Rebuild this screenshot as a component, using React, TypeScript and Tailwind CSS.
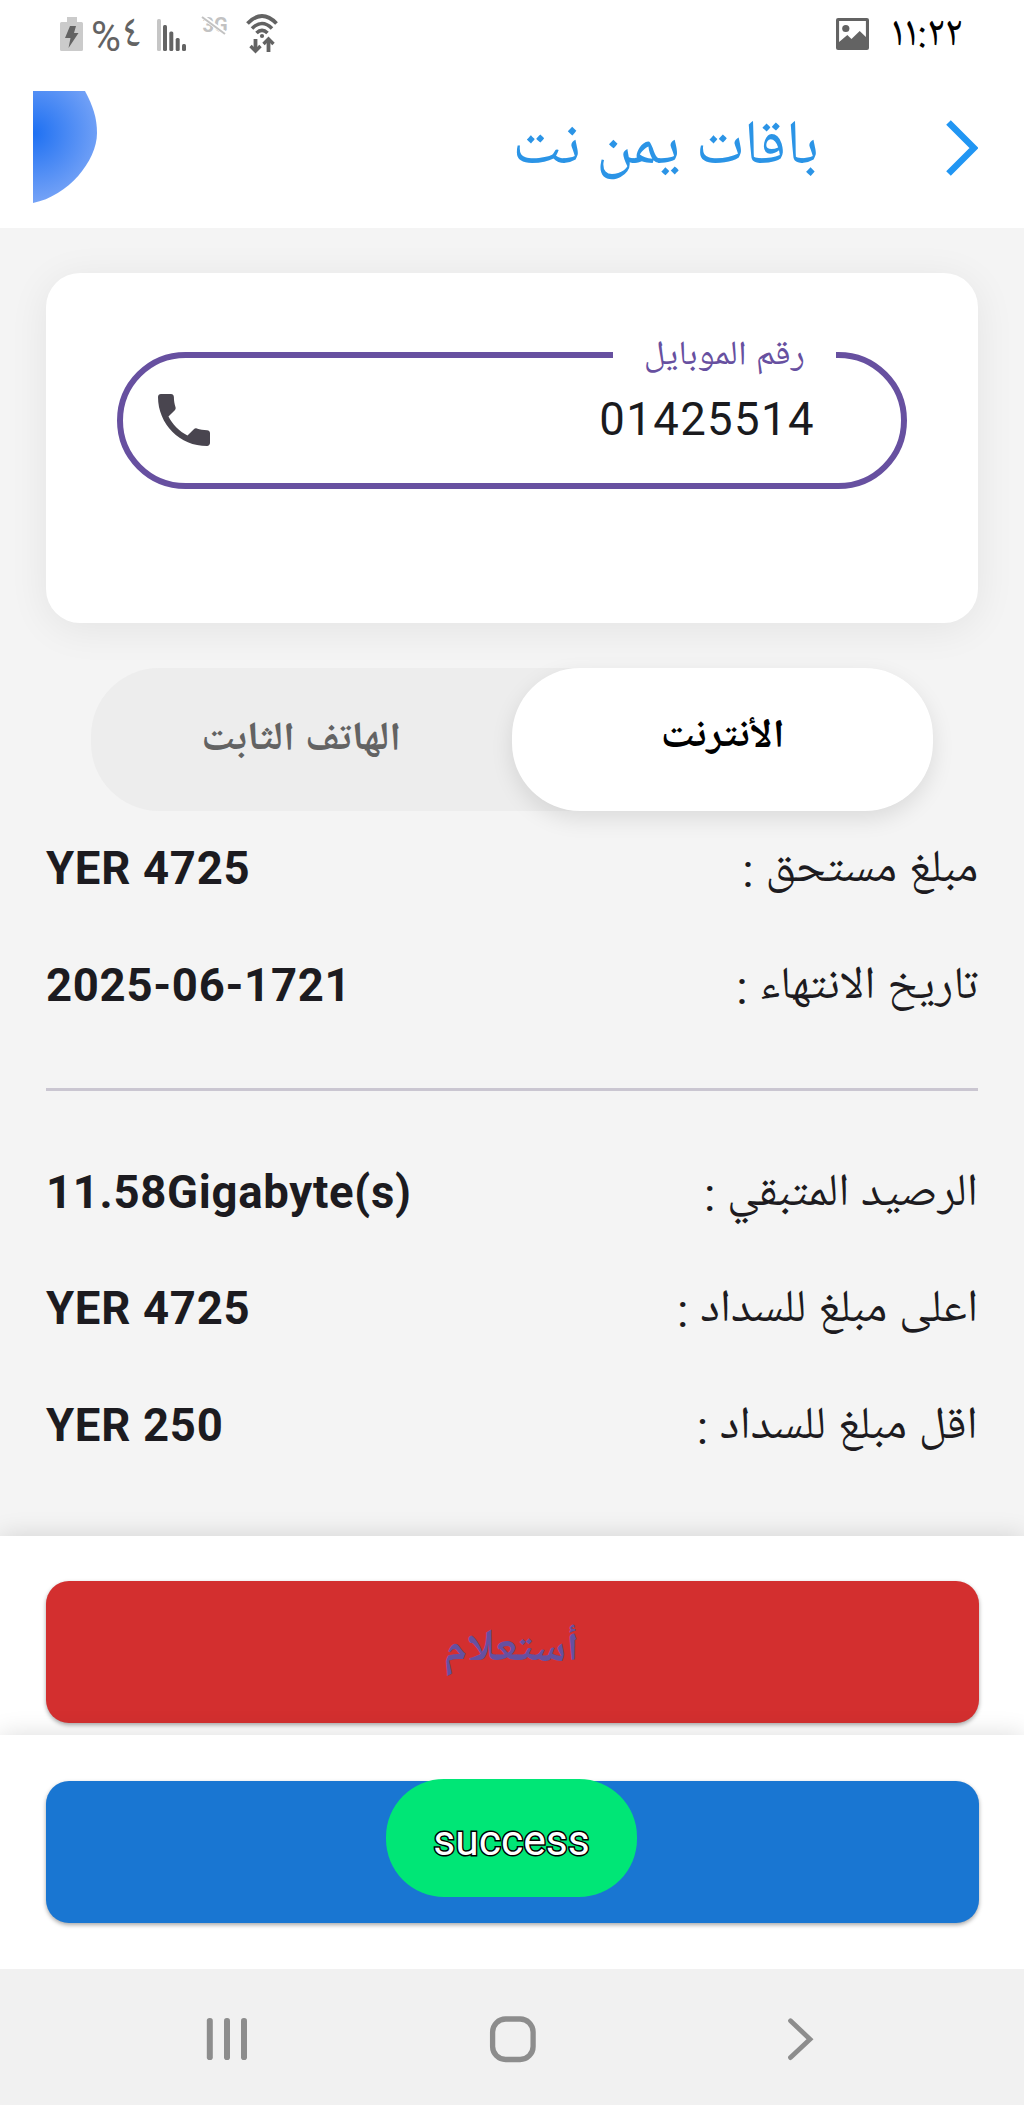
const NASKH = "font-['Noto_Naskh_Arabic_UI','Noto_Naskh_Arabic','Noto_Sans_Arabic','DejaVu_Sans',sans-serif]";
const ARABIC = "font-['Roboto','Noto_Naskh_Arabic_UI','Noto_Naskh_Arabic','Noto_Sans_Arabic','DejaVu_Sans',sans-serif]";

function StatusBar() {
  return (
    <div dir="ltr" className="flex h-[68px] shrink-0 items-start justify-between bg-white pl-[60px] pr-[62px]">
      <div className="flex items-start">
        <svg className="mt-[17px] h-[34px] w-[23px]" viewBox="0 0 23 34">
          <path d="M7 0h10v5h4.500q1.500 0 1.500 1.500v26q0 1.500-1.500 1.500h-20Q0 34 0 32.500v-26Q0 5 1.500 5H7z" fill="#cbcbcb" />
          <path d="M10 9h6l-2 7h4.500L8.500 31l2-10H5z" fill="#636363" />
        </svg>
        <span className="ml-[8px] mt-[14px] w-[31px] origin-left scale-x-[0.950] font-['Roboto'] text-[43px] leading-[44px] text-[#636363]">%</span>
        <span className={`${NASKH} mt-[12px] w-[18px] text-[46px] leading-[44px] text-[#636363]`}>٤</span>
        <svg className="ml-[16px] mt-[18px] h-[34px] w-[31px]" viewBox="0 0 31 34">
          <rect x="1" y="1" width="4" height="32" rx="1.500" fill="#c6c6c6" />
          <rect x="7" y="7" width="4" height="26" rx="1.500" fill="#636363" />
          <rect x="13.300" y="13.500" width="4" height="19.500" rx="1.500" fill="#636363" />
          <rect x="19.700" y="20" width="4" height="13" rx="1.500" fill="#636363" />
          <rect x="26" y="26" width="4" height="7" rx="1.500" fill="#636363" />
        </svg>
        <svg className="ml-[12px] mt-[11px] h-[30px] w-[32px]" viewBox="0 0 32 30">
          <text x="3.500" y="21" fontSize="20" fontWeight="700" className="font-['Roboto']" fill="#c2c2c2">3G</text>
          <path d="M2 4.500l25 18.500" stroke="#fff" strokeWidth="4.500" />
          <path d="M3 6l23 17" stroke="#c2c2c2" strokeWidth="2" />
        </svg>
        <svg className="ml-[15px] mt-[14px] h-[40px] w-[32px]" viewBox="0 0 32 40" fill="none" stroke="#636363">
          <path d="M1.500 9.500Q16-5.500 30.500 9.500" strokeWidth="3.800" />
          <path d="M6 14.500Q16 4.500 26 14.500M10.500 19Q16 13.500 21.500 19" strokeWidth="3.600" />
          <circle cx="16" cy="22" r="2.100" fill="#636363" stroke="none" />
          <path d="M9.500 25v12M22.500 38V26" strokeWidth="3.800" />
          <path d="M4.500 32l5 5 5-5M17.500 30l5-5 5 5" strokeWidth="3.400" />
        </svg>
      </div>
      <div className="flex items-start">
        <svg className="mt-[18px] h-[32px] w-[33px]" viewBox="0 0 32 32" preserveAspectRatio="none">
          <path fillRule="evenodd" d="M2 0h28q2 0 2 2v28q0 2-2 2H2q-2 0-2-2V2Q0 0 2 0zM3 3v21l8-7 4 4 8-8 6 6V3z" fill="#636363" />
          <circle cx="9.500" cy="10.500" r="3.500" fill="#636363" />
        </svg>
        <span className={`${NASKH} ml-[21px] mt-[13px] text-[43px] leading-[44px] text-black`}>١١:٢٢</span>
      </div>
    </div>
  );
}

function AppBar() {
  return (
    <div className="flex h-[160px] shrink-0 items-start justify-between bg-white pl-[33px] pr-[46px]">
      <div className="flex items-start">
        <svg className="mt-[52px] h-[56px] w-[32px]" viewBox="0 0 32 56" fill="none" stroke="#2196f3" strokeWidth="6.500">
          <path d="M2.500 2.500L28 28 2.500 53.500" />
        </svg>
        <h1 className={`${ARABIC} mr-[127px] mt-[47px] text-[62.500px] leading-[70px] text-[#2b94e6]`}>باقات يمن نت</h1>
      </div>
      <svg className="mt-[23px] h-[112px] w-[65px]" viewBox="0 0 65 112">
        <defs>
          <radialGradient id="orb" gradientUnits="userSpaceOnUse" cx="0" cy="42" r="78">
            <stop offset="0" stopColor="#1e70f2" />
            <stop offset="1" stopColor="#80a9f7" />
          </radialGradient>
        </defs>
        <path d="M0 0H52C60 15 64 27 64 42C64 70 35 105 0 112Z" fill="url(#orb)" />
      </svg>
    </div>
  );
}

function PhoneCard() {
  return (
    <div className="mx-[46px] mt-[45px] h-[350px] shrink-0 rounded-[34px] bg-white px-[71px] pt-[79px] shadow-[0_6px_40px_rgba(0,0,0,0.07)]">
      <div className="relative flex h-[137px] items-center justify-between rounded-full border-[6px] border-[#6750a0] pb-px pl-[35px] pr-[86px]">
        <span dir="ltr" className="font-['Roboto'] text-[45.500px] leading-[54px] tracking-[1.400px] text-[#1a1b1e]">01425514</span>
        <svg className="h-[52px] w-[52px]" viewBox="3 3 18 18" fill="#49454f">
          <path d="M6.620 10.790c1.440 2.830 3.760 5.140 6.590 6.590l2.200-2.200c.27-.27.67-.36 1.020-.24 1.120.37 2.330.57 3.570.57.55 0 1 .45 1 1V20c0 .55-.45 1-1 1-9.390 0-17-7.610-17-17 0-.55.45-1 1-1h3.500c.55 0 1 .45 1 1 0 1.250.2 2.450.57 3.570.11.35.03.74-.25 1.020z" />
        </svg>
        <div className={`${ARABIC} absolute right-[65px] top-[-29px] flex h-[56px] w-[223px] items-center justify-center whitespace-nowrap bg-white pr-px text-[34px] leading-[56px] text-[#6750a0]`}>
          <span className="scale-x-[1.085]">رقم الموبايل</span>
        </div>
      </div>
    </div>
  );
}

function Tabs() {
  return (
    <div className="mx-[91px] mt-[45px] flex h-[143px] shrink-0 rounded-[68px] bg-[#ededed]">
      <div className={`${ARABIC} flex w-1/2 items-center justify-center rounded-[68px] bg-white pb-px text-[39.800px] font-bold leading-[60px] text-black shadow-[0_8px_22px_rgba(0,0,0,0.10)]`}>
        <span className="scale-x-[1.055]">الأنترنت</span>
      </div>
      <div className={`${ARABIC} flex w-1/2 items-center justify-center pt-[4px] text-[39.800px] font-bold leading-[60px] text-[#636363]`}>
        <span className="scale-x-[1.050]">الهاتف الثابت</span>
      </div>
    </div>
  );
}

function Row({ label, value }: { label: string; value: string }) {
  return (
    <div className="flex h-[116.500px] shrink-0 items-center justify-between px-[46px]">
      <span className={`${ARABIC} origin-right scale-x-[1.038] pt-[6px] text-[45.500px] leading-[60px] text-[#1d1b20]`}>{label}</span>
      <span dir="ltr" className="font-['Roboto'] text-[45.500px] font-bold leading-[54px] tracking-[0.700px] text-[#1c1b20]">{value}</span>
    </div>
  );
}

function NavBar() {
  return (
    <div dir="ltr" className="relative z-10 flex h-[136.500px] shrink-0 items-start bg-[#f1f1f1] pl-[206px] pt-[49px]">
      <svg className="h-[42px] w-[42px]" viewBox="0 0 42 42" fill="#8d8d8d">
        <rect x="0.800" width="6" height="42" rx="2.800" />
        <rect x="18" width="6" height="42" rx="2.800" />
        <rect x="35" width="6" height="42" rx="2.800" />
      </svg>
      <svg className="-mt-[2px] ml-[241px] h-[47px] w-[47px]" viewBox="0 0 47 47" fill="none" stroke="#8d8d8d" strokeWidth="5.300">
        <rect x="3.600" y="3" width="40.500" height="40.500" rx="13" />
      </svg>
      <svg className="ml-[250px] h-[43px] w-[28px]" viewBox="0 0 28 43" fill="none" stroke="#8d8d8d" strokeWidth="4.800" strokeLinecap="round">
        <path d="M4.500 2.800L24 21.200 4.500 39.600" />
      </svg>
    </div>
  );
}

export default function App() {
  return (
    <div dir="rtl" className="flex h-[2105px] w-[1024px] flex-col overflow-hidden bg-[#f4f4f4]">
      <StatusBar />
      <AppBar />
      <PhoneCard />
      <Tabs />
      <Row label="مبلغ مستحق :" value="YER 4725" />
      <Row label="تاريخ الانتهاء :" value="2025-06-1721" />
      <div className="mx-[46px] mb-[43.700px] mt-[44px] h-[3px] shrink-0 bg-[#cac6d1]" />
      <Row label="الرصيد المتبقي :" value="11.58Gigabyte(s)" />
      <Row label="اعلى مبلغ للسداد :" value="YER 4725" />
      <Row label="اقل مبلغ للسداد :" value="YER 250" />
      <div className="mt-auto h-[198.800px] shrink-0 bg-white px-[45.500px] pt-[45.500px] shadow-[0_0_24px_rgba(0,0,0,0.14)]">
        <div className={`${ARABIC} flex h-[142px] items-center justify-center rounded-[23px] bg-[#d32f2f] pb-px text-[45.500px] font-bold leading-[60px] text-[#6750a0] shadow-[0_2px_4px_rgba(0,0,0,0.35)]`}>
          <span className="scale-x-[1.020]">أستعلام</span>
        </div>
      </div>
      <div className="relative h-[234px] shrink-0 bg-white px-[45.500px] pt-[46px] shadow-[0_0_24px_rgba(0,0,0,0.14)]">
        <div className="h-[142px] rounded-[23px] bg-[#1976d2] shadow-[0_2px_4px_rgba(0,0,0,0.35)]" />
        <div dir="ltr" className="absolute left-[386px] top-[44px] flex h-[118px] w-[251px] items-center justify-center rounded-[58px] bg-[#00e676] pt-[5px] font-['Roboto'] text-[42.600px] leading-[48px] text-white [-webkit-text-stroke:3px_#000] [paint-order:stroke_fill]">success</div>
      </div>
      <NavBar />
    </div>
  );
}
